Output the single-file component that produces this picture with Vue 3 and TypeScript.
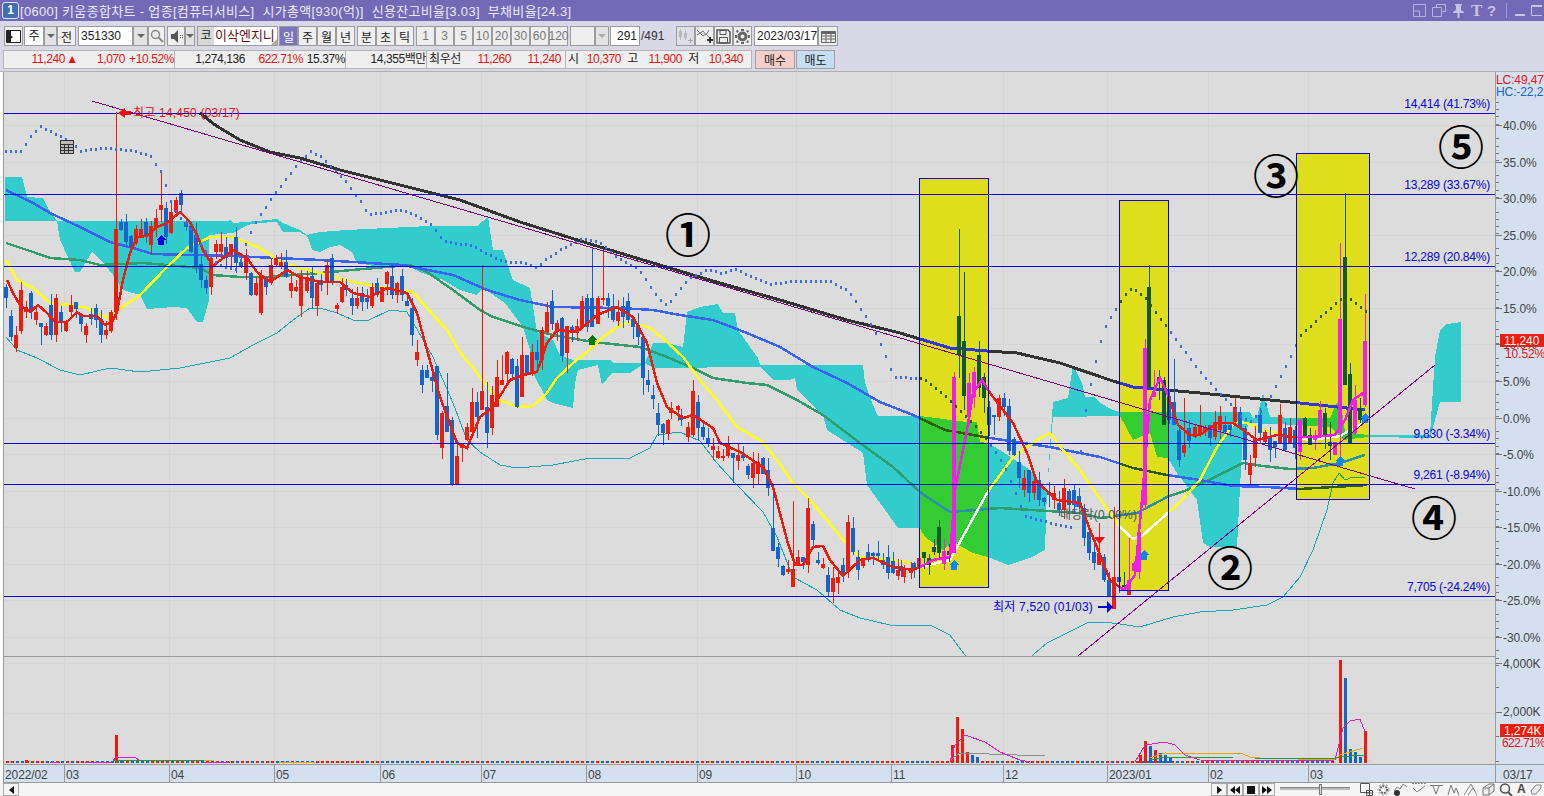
<script setup lang="ts">
type Pt = [number, number]

const gridX = [64, 169, 274, 380, 481, 586, 697, 796, 891, 1003, 1107, 1208, 1308]
const dateLabels: [number, string][] = [
  [5, '2022/02'], [66, '03'], [171, '04'], [276, '05'], [382, '06'], [483, '07'], [588, '08'],
  [699, '09'], [798, '10'], [893, '11'], [1005, '12'], [1109, '2023/01'], [1210, '02'], [1310, '03']
]
const pctLabels = [40, 35, 30, 25, 20, 15, 10, 5, 0, -5, -10, -15, -20, -25, -30]
const yOfPct = (p: number) => 418 - p * 7.314

const levels: [number, string][] = [
  [113, '14,414 (41.73%)'], [194, '13,289 (33.67%)'], [266, '12,289 (20.84%)'],
  [443, '9,830 (-3.34%)'], [484, '9,261 (-8.94%)'], [596, '7,705 (-24.24%)']
]
const boxes = [
  { x: 919, y: 178, w: 69, h: 409 },
  { x: 1119, y: 200, w: 49, h: 390 },
  { x: 1296, y: 153, w: 73, h: 346 }
]

const redLine: Pt[] = [[7, 280], [13, 293], [20, 305], [30, 312], [38, 305], [47, 313], [55, 322], [67, 322], [77, 312], [83, 316], [97, 316], [105, 325], [112, 322], [117, 312], [123, 280], [130, 253], [137, 237], [147, 236], [157, 227], [167, 223], [180, 212], [190, 222], [197, 235], [203, 250], [213, 266], [227, 255], [233, 250], [247, 258], [257, 272], [270, 282], [287, 270], [300, 277], [320, 282], [340, 282], [353, 293], [370, 297], [387, 288], [407, 293], [417, 313], [427, 350], [440, 397], [457, 443], [467, 448], [480, 417], [493, 407], [510, 380], [523, 375], [537, 372], [547, 343], [557, 330], [577, 332], [597, 315], [617, 307], [633, 317], [647, 343], [657, 383], [667, 407], [683, 418], [693, 415], [713, 428], [720, 443], [740, 452], [763, 467], [773, 487], [787, 540], [795, 565], [803, 565], [813, 547], [823, 546], [830, 560], [843, 576], [860, 560], [873, 558], [893, 567], [913, 570], [920, 567], [933, 560], [950, 557], [955, 490], [967, 430], [973, 393], [982, 380], [990, 393], [1013, 423], [1027, 453], [1037, 482], [1057, 500], [1080, 503], [1090, 530], [1100, 555], [1110, 580], [1124, 590], [1135, 575], [1142, 500], [1150, 400], [1160, 378], [1168, 395], [1178, 425], [1190, 435], [1200, 435], [1217, 423], [1233, 423], [1243, 430], [1257, 440], [1277, 435], [1293, 437], [1313, 437], [1335, 435], [1345, 420], [1353, 400], [1363, 393], [1366, 403]]
const yellowLine: Pt[] = [[6, 260], [17, 280], [33, 288], [50, 303], [70, 305], [87, 308], [107, 318], [115, 312], [140, 295], [167, 267], [187, 248], [210, 237], [233, 237], [260, 248], [280, 262], [300, 268], [320, 273], [353, 282], [387, 288], [413, 292], [433, 315], [447, 330], [460, 352], [477, 373], [490, 390], [500, 400], [517, 407], [533, 406], [547, 393], [557, 378], [573, 363], [587, 352], [603, 337], [620, 325], [632, 322], [650, 328], [667, 342], [683, 357], [700, 380], [717, 400], [737, 427], [763, 442], [777, 460], [793, 483], [807, 497], [827, 520], [843, 540], [860, 557], [880, 559], [907, 562], [920, 567], [950, 560], [987, 493], [1013, 457], [1037, 440], [1050, 433], [1063, 450], [1080, 470], [1103, 503], [1120, 527], [1133, 539], [1143, 535], [1160, 520], [1180, 502], [1200, 480], [1217, 447], [1235, 422], [1247, 423], [1263, 430], [1287, 435], [1310, 440], [1340, 436], [1365, 422]]
const blueLine: Pt[] = [[6, 190], [33, 203], [50, 213], [80, 227], [110, 242], [133, 248], [153, 254], [233, 256], [320, 260], [403, 265], [453, 275], [487, 290], [520, 300], [553, 307], [620, 308], [653, 310], [680, 315], [713, 320], [747, 333], [780, 347], [813, 367], [847, 383], [880, 402], [913, 415], [945, 430], [990, 438], [1050, 447], [1100, 457], [1133, 468], [1167, 475], [1200, 480], [1233, 486], [1267, 487], [1300, 489], [1333, 487], [1367, 485]]
const greenLine: Pt[] = [[6, 243], [33, 252], [50, 258], [80, 260], [100, 265], [143, 263], [167, 265], [200, 268], [213, 275], [240, 277], [267, 277], [320, 273], [363, 269], [410, 265], [427, 272], [453, 290], [480, 310], [493, 317], [527, 328], [553, 335], [593, 342], [640, 347], [667, 357], [693, 368], [713, 378], [747, 383], [767, 385], [797, 400], [823, 415], [860, 443], [893, 467], [920, 492], [950, 512], [1000, 508], [1080, 513], [1100, 518], [1137, 513], [1167, 497], [1187, 490], [1213, 478], [1243, 463], [1263, 466], [1290, 469], [1313, 468], [1340, 463], [1365, 455]]
const blackLine: Pt[] = [[200, 113], [215, 125], [240, 140], [270, 152], [300, 158], [340, 170], [400, 185], [460, 200], [520, 222], [587, 243], [653, 263], [720, 283], [780, 300], [847, 320], [900, 333], [920, 339], [950, 348], [987, 351], [1017, 353], [1060, 363], [1113, 381], [1133, 387], [1167, 390], [1200, 393], [1250, 398], [1300, 403], [1365, 410]]
const lowerBand: Pt[] = [[6, 337], [17, 350], [37, 358], [60, 370], [80, 375], [110, 368], [140, 372], [180, 368], [230, 358], [253, 345], [277, 333], [293, 320], [310, 308], [320, 308], [337, 313], [353, 320], [367, 321], [390, 310], [407, 312], [433, 357], [453, 403], [467, 440], [480, 452], [500, 465], [517, 468], [553, 465], [590, 458], [630, 458], [650, 448], [657, 435], [680, 432], [700, 441], [717, 463], [737, 485], [763, 512], [777, 537], [793, 577], [817, 590], [840, 610], [860, 618], [890, 625], [930, 625], [950, 635], [965, 655], [1000, 700], [1033, 655], [1047, 643], [1067, 633], [1087, 623], [1103, 622], [1120, 624], [1140, 627], [1153, 623], [1173, 617], [1200, 612], [1233, 610], [1267, 605], [1283, 597], [1300, 577], [1313, 550], [1327, 510], [1333, 483], [1339, 473], [1345, 480], [1353, 477], [1365, 478]]
const upperBand: Pt[] = [[5, 150], [20, 150], [30, 135], [40, 125], [50, 130], [60, 135], [70, 140], [80, 150], [90, 148], [105, 147], [120, 148], [135, 150], [150, 155], [160, 170], [166, 187], [171, 203], [178, 215], [186, 223], [195, 235], [205, 250], [217, 263], [227, 267], [237, 268], [247, 237], [255, 221], [266, 204], [276, 190], [295, 165], [310, 150], [320, 155], [335, 170], [345, 180], [362, 203], [367, 213], [377, 212], [397, 209], [407, 210], [417, 215], [432, 224], [442, 239], [452, 242], [472, 244], [487, 253], [502, 260], [527, 262], [537, 267], [542, 260], [562, 247], [582, 237], [597, 240], [618, 257], [638, 268], [653, 290], [663, 303], [668, 302], [688, 277], [708, 268], [720, 272], [735, 268], [750, 275], [770, 283], [790, 280], [830, 280], [848, 290], [863, 312], [873, 328], [883, 350], [888, 362], [893, 376], [923, 377], [948, 398], [978, 428], [993, 448], [1003, 463], [1018, 499], [1023, 514], [1043, 520], [1073, 527], [1078, 470], [1083, 419], [1093, 368], [1103, 328], [1118, 303], [1129, 288], [1134, 288], [1144, 296], [1164, 323], [1184, 350], [1199, 370], [1215, 388], [1230, 403], [1240, 415], [1250, 420], [1260, 410], [1270, 395], [1285, 365], [1300, 334], [1320, 315], [1340, 298], [1350, 298], [1365, 310]]

const cloudTop: Pt[] = [[5, 177], [22, 177], [27, 197], [43, 198], [48, 208], [57, 221], [228, 221], [230, 219], [233, 223], [257, 221], [277, 219], [283, 223], [300, 230], [307, 235], [320, 232], [347, 230], [387, 228], [430, 226], [477, 226], [488, 217], [493, 250], [503, 250], [513, 280], [530, 288], [533, 307], [537, 332], [553, 340], [560, 355], [573, 360], [610, 360], [613, 363], [645, 363], [653, 343], [667, 343], [683, 347], [687, 312], [700, 307], [718, 304], [723, 313], [735, 313], [738, 330], [758, 358], [760, 365], [863, 365], [865, 383], [873, 405], [878, 416], [920, 416], [967, 422], [977, 422], [980, 442], [988, 443], [1000, 450], [1030, 470], [1047, 490], [1050, 447], [1053, 402], [1068, 398], [1073, 365], [1082, 383], [1085, 397], [1095, 397], [1100, 403], [1113, 410], [1120, 412], [1250, 412], [1253, 418], [1257, 417], [1263, 393], [1270, 417], [1297, 418], [1330, 418], [1335, 407], [1339, 400], [1343, 417], [1345, 432], [1368, 435], [1430, 435], [1435, 357], [1440, 330], [1447, 324], [1461, 322]]
const cloudBot: Pt[] = [[5, 221], [57, 221], [60, 240], [75, 272], [80, 272], [92, 252], [105, 265], [113, 275], [123, 290], [140, 295], [147, 309], [173, 307], [187, 308], [197, 322], [203, 322], [209, 300], [209, 235], [233, 233], [248, 225], [257, 223], [277, 222], [283, 232], [300, 232], [308, 237], [312, 250], [320, 252], [330, 247], [340, 245], [352, 252], [357, 263], [380, 267], [410, 267], [420, 272], [443, 280], [460, 290], [477, 295], [483, 288], [505, 303], [523, 327], [530, 350], [533, 373], [547, 400], [553, 403], [573, 408], [575, 383], [578, 370], [598, 365], [602, 385], [612, 373], [630, 373], [645, 363], [653, 368], [760, 367], [773, 380], [790, 380], [795, 378], [797, 390], [823, 415], [827, 430], [863, 453], [867, 485], [880, 503], [898, 528], [920, 528], [925, 537], [943, 550], [953, 542], [973, 553], [988, 557], [1008, 565], [1030, 558], [1045, 550], [1047, 490], [1053, 417], [1120, 416], [1133, 440], [1150, 433], [1157, 457], [1168, 458], [1177, 473], [1197, 500], [1203, 543], [1210, 547], [1237, 547], [1240, 487], [1243, 433], [1250, 423], [1297, 425], [1330, 427], [1343, 440], [1368, 437], [1430, 438], [1440, 402], [1461, 402]]

// x, body top, body bottom, up (1 red / 0 blue), optional high and low
const candleData: number[][] = [
  [6, 287, 298, 0], [11, 316, 337, 0], [16, 335, 348, 1], [21, 290, 331, 1], [31, 293, 312, 0], [36, 312, 320, 1], [41, 323, 327, 0, 323, 345], [46, 326, 335, 1], [51, 305, 335, 0], [56, 298, 335, 1], [61, 312, 323, 0], [66, 323, 331, 1], [71, 305, 312, 1], [76, 302, 309, 0], [81, 315, 324, 0], [86, 326, 335, 1], [96, 308, 320, 0], [101, 319, 335, 0], [106, 330, 335, 1], [111, 312, 331, 1],
  [116, 229, 312, 1, 112, 320], [121, 222, 230, 0], [126, 222, 242, 0], [131, 236, 248, 0], [136, 229, 243, 1], [141, 229, 237, 1], [146, 222, 237, 0], [151, 226, 245, 1], [156, 218, 228, 1], [161, 205, 210, 1, 170, 222], [166, 208, 237, 0], [171, 212, 233, 1], [176, 200, 212, 1], [181, 193, 205, 0, 190, 212], [186, 222, 227, 0], [191, 226, 252, 0], [196, 235, 267, 0], [201, 264, 280, 0], [206, 280, 288, 0], [211, 258, 287, 1],
  [216, 244, 252, 1], [221, 244, 252, 1], [226, 247, 258, 0], [231, 244, 255, 1], [236, 237, 263, 0], [241, 262, 267, 0], [246, 257, 273, 1], [251, 273, 295, 0], [256, 283, 295, 1], [261, 276, 313, 1, 270, 315], [266, 277, 287, 0], [271, 265, 283, 1], [276, 258, 265, 1], [281, 262, 267, 1], [286, 262, 277, 0], [291, 283, 291, 1], [296, 287, 291, 1], [301, 276, 306, 1], [307, 277, 291, 1], [312, 276, 298, 0], [317, 283, 306, 1],
  [327, 265, 283, 1], [332, 258, 283, 0], [337, 305, 309, 1], [342, 287, 302, 1], [352, 298, 306, 0], [357, 298, 306, 1], [362, 293, 302, 0], [367, 298, 302, 0], [372, 287, 306, 1], [377, 283, 295, 0], [382, 287, 302, 1], [387, 272, 284, 1], [392, 276, 295, 0], [397, 283, 295, 1], [402, 276, 295, 0], [407, 301, 306, 0], [412, 308, 335, 0], [417, 352, 360, 1], [422, 370, 385, 0], [427, 370, 378, 0], [432, 377, 381, 0],
  [437, 366, 435, 0, 366, 440], [442, 413, 448, 1], [447, 406, 432, 0, 373, 432], [452, 420, 485, 0], [457, 456, 485, 1, 440, 485], [462, 443, 448, 1, 443, 462], [467, 427, 440, 1], [472, 402, 432, 1, 388, 432], [477, 402, 417, 0, 392, 438], [482, 391, 410, 1, 265, 410], [487, 407, 433, 0, 382, 448], [492, 395, 428, 1], [497, 377, 407, 1, 360, 407], [502, 380, 385, 1, 355, 385], [507, 352, 374, 1], [512, 359, 374, 0], [517, 366, 407, 0], [522, 355, 397, 1, 337, 397], [527, 355, 373, 0], [532, 352, 372, 1], [537, 352, 360, 0], [542, 330, 360, 1], [547, 312, 332, 1], [552, 301, 324, 0, 290, 330], [557, 323, 332, 1], [562, 318, 356, 0], [567, 326, 353, 1, 326, 373], [572, 327, 333, 0], [577, 326, 333, 1],
  [582, 301, 327, 1], [587, 298, 327, 0], [592, 298, 327, 0, 248, 327], [598, 298, 324, 1], [603, 298, 300, 1, 252, 305], [608, 298, 306, 0], [613, 306, 320, 0], [618, 312, 321, 1], [623, 306, 317, 0], [628, 301, 320, 0], [633, 319, 327, 0], [638, 325, 337, 0], [643, 337, 378, 0, 337, 395], [648, 380, 385, 0], [653, 395, 399, 0], [658, 413, 425, 0], [663, 424, 433, 0], [668, 420, 434, 1], [678, 406, 410, 1], [688, 427, 437, 1], [693, 391, 435, 1], [698, 402, 428, 0], [703, 427, 437, 0], [708, 438, 443, 0], [713, 446, 450, 1], [718, 451, 458, 1], [723, 456, 458, 1], [728, 443, 456, 1], [733, 453, 458, 0, 453, 483], [738, 455, 461, 1], [743, 455, 458, 0], [748, 466, 475, 0], [753, 463, 478, 1], [758, 462, 474, 1], [763, 458, 474, 0], [768, 470, 488, 0],
  [773, 528, 551, 0, 490, 551], [778, 547, 559, 0], [783, 566, 575, 0], [788, 569, 572, 1], [793, 569, 587, 1, 501, 587], [798, 557, 565, 1], [803, 557, 562, 0], [808, 508, 565, 1], [813, 524, 540, 0], [818, 560, 563, 0], [823, 564, 568, 1], [828, 575, 592, 0], [833, 578, 592, 1], [838, 577, 583, 1], [843, 565, 573, 0], [848, 522, 572, 1], [853, 528, 552, 0], [858, 557, 570, 0], [863, 561, 566, 1], [868, 552, 558, 0], [873, 553, 556, 0], [878, 553, 556, 0], [883, 560, 565, 0], [888, 557, 573, 0], [893, 561, 573, 0], [898, 570, 576, 1], [904, 569, 577, 1], [914, 563, 570, 0], [919, 558, 568, 1], [924, 552, 558, 0], [929, 558, 565, 0], [934, 547, 552, 0], [939, 527, 553, 0], [944, 551, 564, 1], [949, 551, 555, 0],
  [954, 377, 553, 1], [959, 316, 355, 0, 229, 378], [964, 341, 396, 0, 272, 410], [969, 383, 417, 1, 373, 425], [974, 372, 397, 1], [979, 355, 388, 0, 341, 397], [984, 377, 398, 0, 373, 413], [989, 407, 425, 0], [994, 415, 417, 0, 415, 435], [999, 398, 417, 1], [1004, 398, 407, 0], [1009, 406, 451, 0], [1014, 439, 455, 0], [1019, 462, 478, 0], [1024, 478, 490, 1], [1029, 470, 493, 0], [1034, 481, 493, 1], [1039, 480, 500, 0], [1044, 498, 502, 0], [1049, 492, 495, 0], [1054, 493, 500, 1], [1059, 503, 510, 0], [1064, 488, 510, 1], [1069, 491, 505, 0], [1074, 490, 505, 0], [1079, 496, 507, 0], [1084, 508, 538, 0], [1089, 532, 553, 0], [1094, 552, 563, 0], [1099, 553, 565, 1, 523, 565], [1104, 557, 580, 0], [1109, 580, 597, 0, 572, 597], [1114, 577, 609, 1, 507, 609], [1119, 577, 582, 0],
  [1124, 585, 587, 0, 572, 587], [1129, 580, 595, 1, 538, 595], [1134, 563, 571, 1], [1139, 532, 572, 1], [1145, 348, 505, 1], [1149, 287, 388, 0, 265, 388], [1154, 392, 397, 1, 370, 397], [1159, 377, 381, 0, 370, 400], [1164, 380, 425, 0, 377, 425], [1169, 396, 420, 0], [1174, 402, 425, 0, 359, 425], [1179, 430, 460, 0], [1184, 445, 453, 1, 398, 457], [1189, 428, 441, 0], [1195, 427, 437, 1], [1200, 425, 435, 1, 405, 437], [1205, 427, 431, 1], [1210, 425, 438, 0], [1215, 422, 437, 1], [1220, 416, 430, 1], [1225, 425, 432, 0], [1230, 425, 430, 0], [1235, 407, 422, 1], [1240, 412, 428, 0], [1245, 428, 460, 0], [1250, 463, 475, 1, 455, 484], [1255, 438, 458, 1], [1260, 415, 433, 0], [1265, 432, 442, 1], [1270, 438, 450, 0], [1275, 441, 447, 0], [1280, 415, 443, 1], [1285, 428, 450, 0], [1290, 427, 443, 1], [1295, 430, 448, 0],
  [1300, 420, 452, 1, 418, 460], [1305, 418, 438, 0, 417, 438], [1310, 435, 445, 0, 428, 445], [1315, 435, 440, 1], [1320, 410, 437, 1], [1325, 413, 437, 0], [1330, 442, 446, 0, 422, 460], [1335, 442, 455, 1, 442, 455], [1340, 319, 433, 1, 243, 460], [1345, 257, 385, 0, 193, 385], [1350, 374, 443, 0, 363, 443], [1355, 400, 433, 1, 385, 435], [1360, 408, 420, 0, 398, 423], [1365, 341, 405, 1, 294, 407]
]

const interp = (line: Pt[], x: number) => {
  if (x <= line[0][0]) return line[0][1]
  for (let i = 1; i < line.length; i++) {
    if (x <= line[i][0]) {
      const [x0, y0] = line[i - 1]
      const [x1, y1] = line[i]
      return y0 + ((x - x0) / (x1 - x0 || 1)) * (y1 - y0)
    }
  }
  return line[line.length - 1][1]
}
const pts = (line: Pt[]) => line.map(p => p.join(',')).join(' ')

// small fixed random source, so the picture stays the same on each load
let seed = 17
const rnd = () => {
  seed = (seed * 1664525 + 1013904223) % 4294967296
  return seed / 4294967296
}

let redBody = ''
let redWick = ''
let blueBody = ''
let blueWick = ''
const addCandle = (x: number, top: number, bot: number, up: boolean, hi: number, lo: number) => {
  const body = `M${x - 2} ${top}h4v${Math.max(bot - top, 1)}h-4z`
  const wick = `M${x} ${hi}V${lo}`
  if (up) { redBody += body; redWick += wick } else { blueBody += body; blueWick += wick }
}
for (const c of candleData) {
  const hi = c[4] ?? c[1] - Math.round(rnd() * 12)
  const lo = c[5] ?? c[2] + Math.round(rnd() * 12)
  addCandle(c[0], c[1], c[2], c[3] === 1, hi, lo)
}
for (let x = 6; x <= 1365; x += 5) {
  if (candleData.some(c => Math.abs(c[0] - x) < 3)) continue
  const mid = Math.round(interp(redLine, x))
  addCandle(x, mid - 2, mid + 3, rnd() > 0.5, mid - 8, mid + 9)
}

const dots = (() => {
  const out: Pt[] = []
  for (let x = 5; x <= 1365; x += 5) out.push([x, Math.round(interp(upperBand, x))])
  return out
})()

const cloud = pts([...cloudTop, ...[...cloudBot].reverse()])

const arrowUp = (cx: number, top: number) =>
  `${cx},${top} ${cx + 5},${top + 5} ${cx + 3},${top + 5} ${cx + 3},${top + 10} ${cx - 3},${top + 10} ${cx - 3},${top + 5} ${cx - 5},${top + 5}`

const palettes = [
  { id: 'base', clip: undefined, cloud: '#33cccc', band: '#14a8b8', green: '#319c6c', blue: '#3a62f4', black: '#333333', yellow: '#ffff14', red: '#ee1c0c', down: '#1464cc', dot: '#3a6cf0', arrow: '#0000e6', arrow2: '#007a00' },
  { id: 'box', clip: 'url(#boxClip)', cloud: '#33cc33', band: '#1fa050', green: '#2a8fa8', blue: '#2f5c00', black: '#3434dc', yellow: '#ffffff', red: '#f01ee6', down: '#0e5a2e', dot: '#2f5c00', arrow: '#0a86f8', arrow2: '#0a86f8' }
]

const volBars: [number, number, string][] = [
  [116, 735, 'r'], [26, 760, 'r'], [121, 760, 'b'], [952, 745, 'r'], [957, 717, 'r'], [962, 729, 'r'], [967, 752, 'r'], [972, 755, 'b'], [977, 757, 'b'],
  [1140, 755, 'r'], [1145, 741, 'r'], [1150, 746, 'b'], [1155, 750, 'r'], [1160, 753, 'b'], [1165, 755, 'b'], [1170, 757, 'b'],
  [1340, 660, 'r'], [1345, 678, 'b'], [1350, 749, 'b'], [1355, 752, 'b'], [1360, 757, 'b'], [1365, 731, 'r']
]
const volBase: { x: number; c: string }[] = []
for (let x = 6; x <= 1335; x += 5) volBase.push({ x, c: rnd() > 0.5 ? '#ee1c0c' : '#1464cc' })

const volLines: { c: string; p: Pt[] }[] = [
  { c: '#f0a800', p: [[204, 760], [214, 760]] },
  { c: '#f0a800', p: [[279, 762], [315, 762]] },
  { c: '#f0a800', p: [[1150, 758], [1165, 753], [1243, 754], [1250, 757], [1260, 758], [1335, 760], [1340, 755], [1363, 748]] },
  { c: '#8e8e8e', p: [[950, 760], [960, 753], [1045, 756]] },
  { c: '#1a9c40', p: [[113, 760], [204, 760]] },
  { c: '#1a9c40', p: [[1150, 760], [1165, 757], [1233, 758], [1255, 758], [1335, 758], [1340, 757], [1365, 755]] },
  { c: '#e020c0', p: [[113, 760], [118, 757], [135, 757], [139, 760]] },
  { c: '#e020c0', p: [[50, 762], [60, 762]] },
  { c: '#e020c0', p: [[85, 762], [112, 762]] },
  { c: '#e020c0', p: [[204, 762], [230, 762]] },
  { c: '#e020c0', p: [[950, 762], [955, 745], [965, 735], [985, 742], [1000, 752], [1020, 760], [1030, 762]] },
  { c: '#e020c0', p: [[1135, 762], [1145, 745], [1165, 742], [1175, 745], [1185, 755], [1200, 760], [1270, 761], [1335, 760], [1343, 728], [1350, 721], [1360, 719], [1365, 732]] }
]

const circled: [number, number, string][] = [
  [688, 235, '①'], [1230, 568, '②'], [1276, 176, '③'], [1434, 518, '④'], [1461, 147, '⑤']
]

const periodBtns = ['일', '주', '월', '년']
const unitBtns = ['분', '초', '틱']
const stepBtns = ['1', '3', '5', '10', '20', '30', '60', '120']

const quoteCells = [
  { t: '11,240', w: 61, c: 'red' },
  { t: '▲', w: 14, c: 'red', a: 'center' },
  { t: '1,070', w: 46, c: 'red' },
  { t: '+10.52%', w: 50, c: 'red', sep: true },
  { t: '1,274,136', w: 70 },
  { t: '622.71%', w: 58, c: 'red' },
  { t: '15.37%', w: 43, sep: true },
  { t: '14,355백만', w: 81, sep: true },
  { t: '최우선', w: 40, a: 'left' },
  { t: '11,260', w: 44, c: 'red' },
  { t: '11,240', w: 50, c: 'red' },
  { t: '', w: 5, sep: true },
  { t: '시', w: 12, a: 'left' },
  { t: '10,370', w: 43, c: 'red' },
  { t: '고', w: 17 },
  { t: '11,900', w: 44, c: 'red' },
  { t: '저', w: 17 },
  { t: '10,340', w: 44, c: 'red' }
]
</script>

<template>
  <div class="screen">
    <header class="titlebar">
      <span class="win-num">1</span>
      <span class="title">[0600] 키움종합차트 - 업종[컴퓨터서비스]&nbsp; 시가총액[930(억)]&nbsp; 신용잔고비율[3.03]&nbsp; 부채비율[24.3]</span>
      <span class="title-icons">
        <svg width="13" height="13" viewBox="0 0 13 13"><path d="M.5.5h12v12H.5zM.5 7h6v5.500M6.500 7V12" fill="none" stroke="#b7b2d9" /></svg>
        <svg width="14" height="13" viewBox="0 0 14 13"><path d="M4.500 3V.5h9v7h-3M.5 3.500h9v9h-9z" fill="none" stroke="#b7b2d9" /></svg>
        <svg width="13" height="14" viewBox="0 0 13 14"><path d="M3 0h7v1L9 2v4l3 2v1H7.500v5h-2V9H1V8l3-2V2L3 1z" fill="#c6c2e2" /></svg>
        <span class="t-glyph">T</span>
        <span class="q-glyph">?</span>
        <i class="t-div"></i>
        <svg width="10" height="13" viewBox="0 0 10 13"><path d="M0 10h10v2H0z" fill="#c6c2e2" /></svg>
        <svg width="11" height="13" viewBox="0 0 11 13"><path d="M.5 1.500h11v10H.5z M.5 2.500h11" fill="none" stroke="#c6c2e2" /></svg>
      </span>
    </header>

    <div class="toolbars">
      <div class="row">
        <button class="btn w19">
          <svg width="15" height="15" viewBox="0 0 15 15"><path d="M.5 1.500h14v12H.5z" fill="#fff" stroke="#222" /><path d="M1 2h4v11H1z" fill="#222" /><path d="M3 5l4 3-4 3z" fill="#222" /></svg>
        </button>
        <span class="field w20 ml1 center">주</span>
        <button class="btn w13 drop"><i class="tri"></i></button>
        <button class="btn w19">전</button>
        <span class="field w55 ml2">351330</span>
        <button class="btn w15 drop"><i class="tri"></i></button>
        <button class="btn w17">
          <svg width="14" height="14" viewBox="0 0 14 14"><circle cx="5.500" cy="5.500" r="4" fill="none" stroke="#888" stroke-width="1.500" /><path d="M8.500 8.500l4.500 4.500" stroke="#888" stroke-width="2" /></svg>
        </button>
        <button class="btn w18 ml2">
          <svg width="13" height="13" viewBox="0 0 13 13"><path d="M1 4h3l4-4v13L4 9H1z" fill="#555" /><path d="M10 5h1v1h-1zM10 7h1v1h-1zM12 5h1v1h-1zM12 7h1v1h-1z" fill="#555" /></svg>
        </button>
        <button class="btn w10 drop"><i class="tri"></i></button>
        <span class="name-group ml2">
          <span class="market">코</span>
          <span class="stock-name">이삭엔지니<i class="corner"></i></span>
        </span>
        <button v-for="(b, i) in periodBtns" :key="b" class="btn w19" :class="{ on: i === 0, ml1: i === 0 }">{{ b }}</button>
        <button v-for="(b, i) in unitBtns" :key="b" class="btn w19" :class="{ ml2: i === 0 }">{{ b }}</button>
        <button v-for="(b, i) in stepBtns" :key="b" class="btn w19 dim" :class="{ ml2: i === 0 }">{{ b }}</button>
        <span class="field w25 ml2 blank"></span>
        <button class="btn w14 drop"><i class="tri light"></i></button>
        <span class="field w30 ml1 right">291</span>
        <span class="count">/491</span>
        <button class="btn w19 blank-btn">
          <svg width="17" height="16" viewBox="0 0 17 16"><path d="M2 3h1V1h1v2h1v6H4v3H3V9H2zM7 5h1V2h1v3h1v5H9v2H8v-2H7z" fill="#b8b8b8" /><path d="M13 10h1v2h2v1h-2v2h-1v-2h-2v-1h2z" fill="#aaa" /></svg>
        </button>
        <button class="btn w19">
          <svg width="17" height="16" viewBox="0 0 17 16"><path d="M1 2l3 3 3-2 3 4 3-5M1 7l3-2 3 3 3-2 4 4" fill="none" stroke="#777" /><path d="M11 11h2V9h2v2h2v2h-2v2h-2v-2h-2z" fill="#333" /></svg>
        </button>
        <button class="btn w19">
          <svg width="15" height="15" viewBox="0 0 15 15"><path d="M1 1h11l2 2v11H1z" fill="none" stroke="#555" stroke-width="1.500" /><path d="M4 1.500h6v4H4zM3.500 8.500h8v5.500h-8z" fill="none" stroke="#555" /></svg>
        </button>
        <button class="btn w19">
          <svg width="15" height="15" viewBox="0 0 15 15"><circle cx="7.500" cy="7.500" r="3.500" fill="none" stroke="#666" stroke-width="3" /><path d="M6 0h3v2H6zM6 13h3v2H6zM0 6h2v3H0zM13 6h2v3h-2zM2 1l2 1-2 2-1-2zM13 1l1 1-1 2-2-2zM2 14l-1-1 1-2 2 2zM13 14l-2-1 2-2 1 2z" fill="#666" /></svg>
        </button>
        <span class="field w64 ml2 center">2023/03/17</span>
        <button class="btn w20">
          <svg width="15" height="13" viewBox="0 0 15 13"><path d="M.5 1.500h14v11H.5zM.5 6h14M.5 9h14M5 4v8M10 4v8" fill="none" stroke="#666" /><path d="M1 2h13v2H1z" fill="#666" /></svg>
        </button>
      </div>

      <div class="row row2">
        <div class="quote">
          <span
            v-for="(c, i) in quoteCells"
            :key="i"
            class="cell"
            :class="[c.c, c.a, { sep: c.sep }]"
            :style="{ width: c.w + 'px' }"
          >{{ c.t }}</span>
        </div>
        <button class="order buy">매수</button>
        <button class="order sell">매도</button>
      </div>
    </div>

    <svg class="chart" width="1544" height="712" viewBox="0 71 1544 712">
      <defs>
        <clipPath id="priceClip"><rect x="4" y="72" width="1491" height="584" /></clipPath>
        <clipPath id="boxClip"><rect v-for="b in boxes" :key="b.x" :x="b.x" :y="b.y" :width="b.w" :height="b.h" /></clipPath>
      </defs>

      <rect x="3" y="71" width="1541" height="712" fill="#dcdcdc" />
      <rect x="1495" y="72" width="49" height="711" fill="#d5e0ef" />
      <rect x="3" y="765" width="1541" height="18" fill="#d5e0ef" />

      <g class="crisp" stroke="#d5d5d5">
        <line v-for="x in gridX" :key="x" :x1="x" :x2="x" y1="72" y2="764" />
        <line v-for="p in pctLabels" :key="p" x1="4" x2="1495" :y1="yOfPct(p)" :y2="yOfPct(p)" />
        <line x1="4" x2="1495" y1="663" y2="663" />
        <line x1="4" x2="1495" y1="713" y2="713" />
      </g>

      <g clip-path="url(#priceClip)">
        <template v-for="(p, i) in palettes" :key="p.id">
          <template v-if="i === 1">
            <rect v-for="b in boxes" :key="b.x" :x="b.x" :y="b.y" :width="b.w" :height="b.h" fill="#dede1c" />
          </template>
          <g class="crisp" :clip-path="p.clip">
            <polygon :points="cloud" :fill="p.cloud" />
            <polyline :points="pts(lowerBand)" fill="none" :stroke="p.band" stroke-width="1" />
            <polyline :points="pts(greenLine)" fill="none" :stroke="p.green" stroke-width="2.500" />
            <polyline :points="pts(blueLine)" fill="none" :stroke="p.blue" stroke-width="2.500" />
            <polyline :points="pts(blackLine)" fill="none" :stroke="p.black" stroke-width="3" />
            <polyline :points="pts(yellowLine)" fill="none" :stroke="p.yellow" stroke-width="2.500" />
            <path :d="redWick" fill="none" :stroke="p.red" />
            <path :d="blueWick" fill="none" :stroke="p.down" />
            <path :d="redBody" :fill="p.red" />
            <path :d="blueBody" :fill="p.down" />
            <polyline :points="pts(redLine)" fill="none" :stroke="p.red" stroke-width="2.500" />
            <rect v-for="d in dots" :key="d[0]" :x="d[0]" :y="d[1]" width="2" height="3" :fill="p.dot" />
            <polygon :points="arrowUp(161, 235)" :fill="p.arrow" />
            <polygon :points="arrowUp(592, 335)" :fill="p.arrow2" />
            <polygon :points="arrowUp(954, 560)" :fill="p.arrow" />
            <polygon :points="arrowUp(1144, 550)" :fill="p.arrow" />
            <polygon :points="arrowUp(1340, 456)" :fill="p.arrow" />
            <polygon :points="arrowUp(1365, 413)" :fill="p.arrow" />
          </g>
        </template>

        <g class="crisp">
          <rect v-for="b in boxes" :key="b.x" :x="b.x + 0.5" :y="b.y + 0.5" :width="b.w" :height="b.h" fill="none" stroke="#0000e6" />
          <line v-for="l in levels" :key="l[0]" x1="4" x2="1495" :y1="l[0]" :y2="l[0]" stroke="#0000e6" />
          <line x1="92" y1="101" x2="1415" y2="489" stroke="#880088" />
          <line x1="1078" y1="656" x2="1435" y2="365" stroke="#880088" />
        </g>

        <text v-for="l in levels" :key="l[1]" class="lvl" x="1490" :y="l[0] - 5">{{ l[1] }}</text>

        <line class="crisp" x1="116" x2="116" y1="113" y2="120" stroke="#ee1c0c" />
        <polygon points="118,113 125,108 125,111 131,111 131,115 125,115 125,118" fill="#ee1111" />
        <text class="mark red-t" x="133" y="117">최고 14,450 (03/17)</text>
        <text class="mark blue-t" x="993" y="611">최저 7,520 (01/03)</text>
        <polygon points="1098,606 1107,606 1107,601 1113,607 1107,613 1107,608 1098,608" fill="#0000e6" />
        <text class="mark gray-t" x="1060" y="519">배당락(0.00%)</text>
        <polygon points="1094,537 1105,537 1099.500,544" fill="#ee1111" />

        <g class="crisp" fill="none" stroke="#333">
          <rect x="60.500" y="140.500" width="13" height="13" fill="#bbb" />
          <path d="M60.500 144.500h13M60.500 147.500h13M60.500 150.500h13M64.500 144v9M68.500 144v9" />
        </g>

        <text v-for="c in circled" :key="c[2]" class="circled" :x="c[0]" :y="c[1] + 17">{{ c[2] }}</text>
      </g>

      <!-- volume panel -->
      <g class="crisp">
        <rect v-for="v in volBase" :key="v.x" :x="v.x" y="761" width="3" height="2" :fill="v.c" />
        <rect v-for="v in volBars" :key="v[0]" :x="v[0] - 1" :y="v[1]" width="3" :height="763 - v[1]" :fill="v[2] === 'r' ? '#ee1c0c' : '#1464cc'" />
        <polyline v-for="(l, i) in volLines" :key="i" :points="pts(l.p)" fill="none" :stroke="l.c" />
      </g>

      <!-- frame, axes -->
      <g class="crisp" stroke="#9a9a9a">
        <line x1="3.500" x2="3.500" y1="72" y2="783" />
        <line x1="0" x2="1544" y1="71.500" y2="71.500" stroke="#b0b0b0" />
        <line x1="3" x2="1495" y1="656.500" y2="656.500" />
        <line x1="3" x2="1544" y1="764.500" y2="764.500" />
        <line x1="3" x2="1544" y1="782.500" y2="782.500" />
        <line x1="1495.500" x2="1495.500" y1="72" y2="783" />
        <line v-for="x in gridX" :key="x" :x1="x + 0.5" :x2="x + 0.5" y1="765" y2="783" />
      </g>

      <g class="crisp" stroke="#777">
        <line v-for="p in pctLabels" :key="p" x1="1496" x2="1502" :y1="yOfPct(p)" :y2="yOfPct(p)" />
        <template v-for="n in 78" :key="n">
          <line v-if="n % 5" x1="1496" x2="1499" :y1="95 + n * 7.314" :y2="95 + n * 7.314" />
        </template>
        <line x1="1496" x2="1502" y1="663" y2="663" />
        <line x1="1496" x2="1502" y1="712" y2="712" />
        <line x1="1496" x2="1499" y1="687" y2="687" />
        <line x1="1496" x2="1499" y1="736" y2="736" />
        <line x1="1496" x2="1499" y1="761" y2="761" />
      </g>

      <text class="axis lc" x="1496" y="84">LC:49,47</text>
      <text class="axis hc" x="1496" y="96">HC:-22,2</text>
      <text v-for="p in pctLabels" :key="p" class="axis" x="1503" :y="yOfPct(p) + 4.500">{{ p }}.0%</text>
      <text class="axis" x="1503" y="668">4,000K</text>
      <text class="axis" x="1503" y="716">2,000K</text>

      <rect x="1500" y="334" width="44" height="13" fill="#ee1c0c" />
      <text class="axis tag" x="1504" y="345">11,240</text>
      <text class="axis lc" x="1505" y="358">10.52%</text>
      <rect x="1500" y="724" width="44" height="13" fill="#ee1c0c" />
      <text class="axis tag" x="1504" y="735">1,274K</text>
      <text class="axis lc tight" x="1502" y="747">622.71%</text>

      <text v-for="d in dateLabels" :key="d[0]" class="axis" :x="d[0]" y="779">{{ d[1] }}</text>
      <text class="axis" x="1503" y="779">03/17</text>
    </svg>

    <footer class="scrollbar">
      <button class="sbtn first"><i class="t-left"></i></button>
      <span class="spacer"></span>
      <button class="sbtn"><i class="t-right"></i></button>
      <button class="sbtn"><i class="t-left"></i><i class="t-left"></i></button>
      <button class="sbtn"><i class="square"></i></button>
      <button class="sbtn"><i class="t-right"></i><i class="t-right"></i></button>
      <span class="slider"><i></i></span>
      <span class="tools">
        <svg width="13" height="13" viewBox="0 0 13 13"><path d="M.5.5h9v9h-9zM6.500 7.500h6v5h-6zM9.500 7.500v5M6.500 10h6" fill="#fff" stroke="#555" /></svg>
        <svg width="13" height="13" viewBox="0 0 13 13"><circle cx="6.500" cy="6.500" r="3.500" fill="none" stroke="#666" stroke-width="2" stroke-dasharray="2 1" /><circle cx="6.500" cy="6.500" r="5.500" fill="none" stroke="#888" stroke-dasharray="2 2" /></svg>
        <svg width="14" height="13" viewBox="0 0 14 13"><path d="M0 8l3-4 3 2 3-5 4 3" fill="none" stroke="#888" /><circle cx="3" cy="10" r="3" fill="#333" /></svg>
        <svg width="14" height="13" viewBox="0 0 14 13"><path d="M0 .5h14" stroke="#888" stroke-dasharray="2 1" /><path d="M1 5l4 4 4-3 4-3" fill="none" stroke="#888" /></svg>
        <svg width="13" height="13" viewBox="0 0 13 13"><path d="M0 2.500h13M3 3l3 8 3-8" fill="none" stroke="#777" /></svg>
        <svg width="13" height="13" viewBox="0 0 13 13"><path d="M1 12L4 2l3 8 2-5 3 7" fill="none" stroke="#777" /></svg>
        <svg width="14" height="13" viewBox="0 0 14 13"><path d="M0 12L7 1l6 11M4 12L9 5" fill="none" stroke="#888" /></svg>
        <svg width="13" height="13" viewBox="0 0 13 13"><path d="M1 5l6-4h5v7l-5 4H1zM1 5h6v7M7 5l5-4" fill="#eee" stroke="#777" /></svg>
        <svg width="14" height="13" viewBox="0 0 14 13"><circle cx="6" cy="5.500" r="4.500" fill="none" stroke="#555" stroke-width="1.500" /><path d="M9 9l4 4" stroke="#555" stroke-width="2" /></svg>
        <span class="font-a">A</span>
        <svg width="12" height="13" viewBox="0 0 12 13"><path d="M1 8l5-6h5v3l-5 6H2z" fill="#eee" stroke="#888" /></svg>
      </span>
    </footer>
  </div>
</template>

<style scoped>
.screen {
  width: 1544px;
  height: 796px;
  overflow: hidden;
  display: flex;
  flex-direction: column;
  background: #fff;
  font-family: "Liberation Sans", "Noto Sans CJK KR", sans-serif;
  font-size: 12px;
  color: #222;
}

.titlebar {
  height: 21px;
  flex: none;
  display: flex;
  align-items: center;
  padding-left: 2px;
  background: #7369b7;
  color: #ebe9f7;
}
.win-num {
  width: 15px;
  height: 15px;
  border: 1px solid #e6e6f6;
  border-radius: 3px;
  background: #3e6fb8;
  color: #fff;
  font-weight: 700;
  font-size: 12px;
  line-height: 15px;
  text-align: center;
}
.title {
  margin-left: 1px;
  font-size: 13px;
  letter-spacing: 0.33px;
  white-space: pre;
}
.title-icons {
  margin-left: auto;
  display: flex;
  align-items: center;
  height: 21px;
  width: 131px;
  gap: 6px;
  flex: none;
  color: #c6c2e2;
}
.t-glyph {
  font-family: "Liberation Serif", serif;
  font-size: 17px;
  font-weight: 700;
  line-height: 17px;
  width: 10px;
}
.q-glyph {
  font-size: 15px;
  font-weight: 700;
  width: 11px;
}
.t-div {
  width: 1px;
  height: 15px;
  background: #a29bd0;
  margin: 0 2px;
}

.toolbars {
  height: 50px;
  flex: none;
  background: #d8d8e7;
  box-sizing: border-box;
  padding: 5px 0 0 4px;
}
.row {
  display: flex;
  height: 20px;
  align-items: stretch;
}
.row2 {
  height: 19px;
  margin: 4px 0 0 -1px;
}

.btn {
  box-sizing: border-box;
  padding: 0;
  display: inline-flex;
  align-items: center;
  justify-content: center;
  border: 1px solid #9c9c9c;
  background: #efefef;
  font: inherit;
  color: #222;
  flex: none;
}
.btn.on {
  background: #7c73bd;
  color: #fff;
}
.btn.dim {
  color: #777;
  background: #ededed;
}
.blank-btn { background: #dedee8; }
.drop { background: #e2e2e2; }
.tri {
  width: 0;
  height: 0;
  border-left: 4px solid transparent;
  border-right: 4px solid transparent;
  border-top: 4px solid #666;
}
.tri.light { border-top-color: #aaa; }

.field {
  box-sizing: border-box;
  flex: none;
  border: 1px solid #9c9c9c;
  background: #fff;
  line-height: 18px;
  padding: 0 2px;
  white-space: nowrap;
  overflow: hidden;
}
.center { text-align: center; }
.right { text-align: right; }
.blank { background: #efefef; }
.count {
  width: 35px;
  flex: none;
  line-height: 20px;
  padding-left: 1px;
  color: #333;
}

.w10 { width: 10px; }
.w13 { width: 13px; }
.w14 { width: 14px; }
.w15 { width: 15px; }
.w17 { width: 17px; }
.w18 { width: 18px; }
.w19 { width: 19px; }
.w20 { width: 20px; }
.w25 { width: 25px; }
.w30 { width: 30px; }
.w55 { width: 55px; }
.w64 { width: 64px; }
.ml1 { margin-left: 1px; }
.ml2 { margin-left: 2px; }

.name-group {
  display: flex;
  width: 81px;
  flex: none;
  box-sizing: border-box;
  border: 1px solid #9c9c9c;
  background: #fff;
  line-height: 18px;
}
.market {
  width: 16px;
  background: #d8d8d8;
  text-align: center;
}
.stock-name {
  position: relative;
  flex: 1;
  padding-left: 1px;
  color: #6e0e0e;
  font-size: 13px;
  white-space: nowrap;
  overflow: hidden;
}
.corner {
  position: absolute;
  right: 0;
  bottom: 0;
  border-left: 6px solid transparent;
  border-bottom: 6px solid #aaa;
}

.quote {
  display: flex;
  width: 749px;
  flex: none;
  box-sizing: border-box;
  border: 1px solid #b4b4b4;
  background: #efefef;
  line-height: 17px;
}
.cell {
  box-sizing: border-box;
  flex: none;
  text-align: right;
  white-space: nowrap;
  letter-spacing: -0.4px;
}
.cell.left { text-align: left; padding-left: 2px; }
.cell.center { text-align: center; }
.cell.red { color: #ee1111; }
.cell.sep { border-right: 1px solid #b4b4b4; }

.order {
  box-sizing: border-box;
  height: 19px;
  padding: 0;
  flex: none;
  border: 1px solid #a0a0a0;
  font: inherit;
  color: #222;
}
.buy { width: 40px; margin-left: 3px; background: #f4cfc9; }
.sell { width: 39px; margin-left: 1px; background: #c7def2; }

.chart {
  display: block;
  flex: none;
}
.crisp, .crisp * { shape-rendering: crispEdges; }

.lvl {
  fill: #0000e6;
  font-size: 12px;
  letter-spacing: -0.2px;
  text-anchor: end;
}
.mark { font-size: 12px; letter-spacing: 0.2px; }
.red-t { fill: #ee1111; }
.blue-t { fill: #0000e6; }
.gray-t { fill: #555; }
.circled {
  fill: #000;
  font-family: "Noto Sans CJK KR", sans-serif;
  font-size: 46px;
  font-weight: 700;
  text-anchor: middle;
}
.axis {
  fill: #444;
  font-size: 12px;
  letter-spacing: -0.1px;
}
.axis.lc { fill: #ee1111; }
.axis.hc { fill: #1464cc; }
.axis.tag { fill: #fff; }
.axis.tight { letter-spacing: -0.6px; }

.scrollbar {
  height: 13px;
  flex: none;
  display: flex;
  align-items: stretch;
  background: #f5f5f5;
  overflow: hidden;
}
.sbtn {
  width: 16px;
  box-sizing: border-box;
  padding: 0;
  display: inline-flex;
  align-items: center;
  justify-content: center;
  border: 1px solid #aaa;
  background: #f4f4f4;
  flex: none;
}
.sbtn.first { margin-left: 3px; }
.spacer { flex: 1; }
.t-left, .t-right {
  width: 0;
  height: 0;
  border-top: 4px solid transparent;
  border-bottom: 4px solid transparent;
}
.t-left { border-right: 5px solid #111; }
.t-right { border-left: 5px solid #111; }
.square {
  width: 8px;
  height: 8px;
  background: #111;
}
.slider {
  position: relative;
  width: 70px;
  margin: 0 5px;
  flex: none;
}
.slider::before {
  content: "";
  position: absolute;
  left: 0;
  right: 0;
  top: 4px;
  height: 2px;
  background: #bbb;
  border-top: 1px solid #888;
}
.slider i {
  position: absolute;
  left: 39px;
  top: 1px;
  width: 3px;
  height: 11px;
  background: #ddd;
  border: 1px solid #777;
  box-sizing: border-box;
}
.tools {
  display: flex;
  align-items: center;
  gap: 4px;
  width: 189px;
  flex: none;
  padding-left: 5px;
  box-sizing: border-box;
}
.tools svg { flex: none; }
.font-a {
  font-size: 12px;
  font-weight: 700;
  line-height: 13px;
  color: #444;
}
</style>

<style>
html, body {
  margin: 0;
  background: #fff;
  overflow: hidden;
}
</style>
